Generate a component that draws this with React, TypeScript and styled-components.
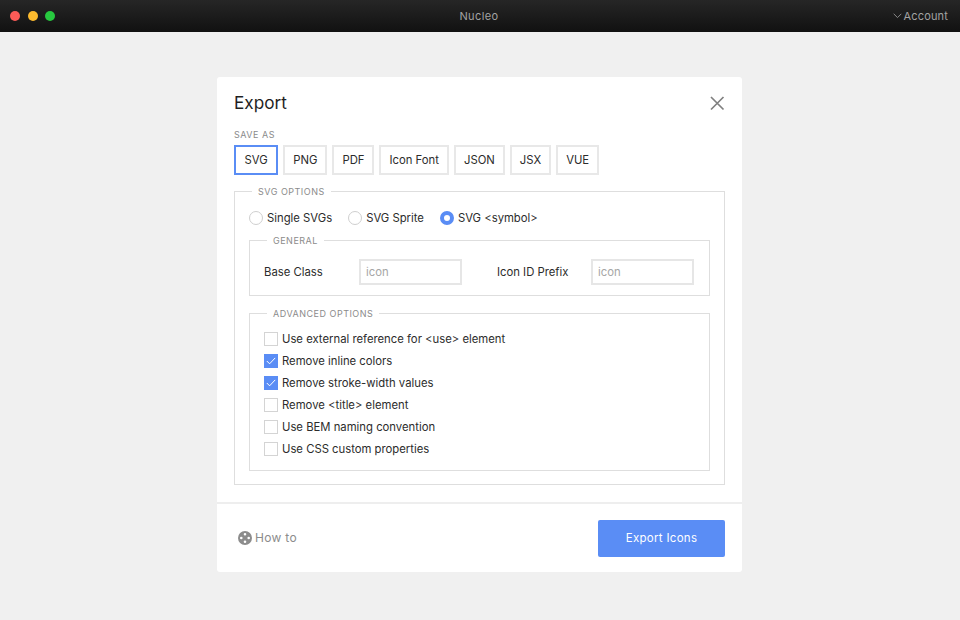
import { useState } from "react";
import styled, { createGlobalStyle } from "styled-components";

const GlobalStyle = createGlobalStyle`
	html, body {
		margin: 0;
		padding: 0;
		height: 620px;
		overflow: hidden;
		background: #f0f0f0;
		font-family: Inter, "Liberation Sans", sans-serif;
		color: #2c2c2c;
	}
`;

const Page = styled.div`
	width: 960px;
	height: 620px;
	display: flex;
	flex-direction: column;
`;

const TitleBar = styled.header`
	height: 32px;
	flex: none;
	display: grid;
	grid-template-columns: 1fr auto 1fr;
	align-items: center;
	padding: 0 12px 0 10px;
	box-sizing: border-box;
	background: linear-gradient(#262626, #111111);
`;

const Lights = styled.div`
	display: flex;
	gap: 7.5px;
`;

const Light = styled.span<{ $color: string }>`
	width: 10px;
	height: 10px;
	border-radius: 50%;
	background: ${(p) => p.$color};
`;

const AppName = styled.div`
	font-size: 11px;
	letter-spacing: 0.4px;
	color: #a3a3a3;
`;

const Account = styled.div`
	justify-self: end;
	display: flex;
	align-items: center;
	gap: 2px;
	font-size: 11px;
	letter-spacing: 0.15px;
	color: #a3a3a3;
`;

const Stage = styled.main`
	flex: 1;
	padding: 45px 0 0 217px;
`;

const Dialog = styled.section`
	width: 525px;
	height: 495px;
	box-sizing: border-box;
	display: flex;
	flex-direction: column;
	background: #fff;
	border-radius: 3px;
`;

const DialogBody = styled.div`
	padding: 0 17px;
	height: 425px;
	box-sizing: border-box;
`;

const Head = styled.div`
	height: 51px;
	padding-bottom: 1px;
	margin-bottom: 1px;
	box-sizing: border-box;
	display: flex;
	align-items: center;
	justify-content: space-between;
`;

const Title = styled.h1`
	margin: 0;
	font-size: 17.2px;
	font-weight: 400;
	color: #1f1f1f;
`;

const CloseButton = styled.button`
	width: 18px;
	height: 18px;
	padding: 0;
	margin: 2px -1px 0 0;
	border: 0;
	background: none;
	display: flex;
`;

const SmallCaps = styled.div`
	font-size: 9px;
	line-height: 12px;
	letter-spacing: 0.5px;
	color: #8b8b8b;
	text-transform: uppercase;
`;

const Formats = styled.div`
	display: flex;
	gap: 5px;
	margin-top: 4px;
`;

const FormatButton = styled.button<{ $active?: boolean }>`
	height: 30px;
	box-sizing: border-box;
	padding: 0 ${(p) => (p.$active ? "8.6px" : "8px")};
	font: 400 11.3px Inter, "Liberation Sans", sans-serif;
	color: #2c2c2c;
	background: #fff;
	border: ${(p) => (p.$active ? "2px solid #5a8df5" : "2px solid #e8e8e8")};
`;

const Group = styled.fieldset`
	margin: 0;
	padding: 0 14px;
	border: 1px solid #dedede;
	min-width: 0;
`;

const OuterGroup = styled(Group)`
	margin-top: 9px;
	height: 301px;
	box-sizing: border-box;
`;

const Legend = styled.legend`
	margin-left: 3px;
	padding: 2px 6px 0;
	font-size: 9px;
	line-height: 12px;
	letter-spacing: 0.5px;
	color: #8b8b8b;
	text-transform: uppercase;
`;

const RadioRow = styled.div`
	display: flex;
	gap: 16px;
	margin: 12px 0 0 0;
	height: 16px;
	align-items: center;
`;

const RadioLabel = styled.label`
	display: flex;
	align-items: center;
	gap: 4px;
	font-size: 11.3px;
	color: #2c2c2c;
`;

const RadioDot = styled.span<{ $on?: boolean }>`
	width: 14px;
	height: 14px;
	border-radius: 50%;
	box-sizing: border-box;
	background: #fff;
	border: ${(p) => (p.$on ? "4px solid #5a8df5" : "1px solid #cfcfcf")};
`;

const GeneralGroup = styled(Group)`
	margin-top: 7px;
	height: 63px;
	box-sizing: border-box;
`;

const FieldRow = styled.div`
	display: grid;
	grid-template-columns: 95px 103px 35px 94px 103px;
	align-items: center;
	margin-top: 12px;
`;

const FieldLabel = styled.label`
	font-size: 11.3px;
	color: #2c2c2c;
`;

const TextBox = styled.input`
	width: 103px;
	height: 26px;
	box-sizing: border-box;
	padding: 0 5px;
	border: 2px solid #e6e6e6;
	font: 400 11.3px Inter, "Liberation Sans", sans-serif;
	outline: none;
	&::placeholder {
		color: #a6a6a6;
	}
`;

const AdvancedGroup = styled(Group)`
	margin-top: 10px;
	height: 165px;
	box-sizing: border-box;
`;

const CheckList = styled.ul`
	list-style: none;
	margin: 8px 0 0;
	padding: 0;
	display: flex;
	flex-direction: column;
`;

const CheckRow = styled.li`
	height: 22px;
	display: flex;
	align-items: center;
	gap: 4px;
	font-size: 11.3px;
	color: #2c2c2c;
`;

const CheckBox = styled.span<{ $on: boolean }>`
	width: 14px;
	height: 14px;
	box-sizing: border-box;
	display: flex;
	align-items: center;
	justify-content: center;
	background: ${(p) => (p.$on ? "#5a8df5" : "#fff")};
	border: ${(p) => (p.$on ? "0" : "1px solid #d4d4d4")};
`;

const Footer = styled.footer`
	flex: 1;
	border-top: 2px solid #eeeeee;
	display: flex;
	align-items: center;
	justify-content: space-between;
	padding: 0 17px 0 21px;
`;

const HowTo = styled.a`
	display: flex;
	align-items: center;
	gap: 3px;
	font-size: 12px;
	line-height: 14px;
	letter-spacing: 0.3px;
	color: #8c8c8c;
	margin-top: -1px;
`;

const ExportButton = styled.button`
	width: 127px;
	height: 37px;
	border: 0;
	border-radius: 2px;
	background: #5a8df5;
	color: #fff;
	font: 400 11.5px Inter, "Liberation Sans", sans-serif;
	letter-spacing: 0.3px;
`;

const formats = ["SVG", "PNG", "PDF", "Icon Font", "JSON", "JSX", "VUE"];
const radios = ["Single SVGs", "SVG Sprite", "SVG <symbol>"];
const advanced = [
	{ label: "Use external reference for <use> element", on: false },
	{ label: "Remove inline colors", on: true },
	{ label: "Remove stroke-width values", on: true },
	{ label: "Remove <title> element", on: false },
	{ label: "Use BEM naming convention", on: false },
	{ label: "Use CSS custom properties", on: false },
];

export default function App() {
	const [format, setFormat] = useState("SVG");

	return (
		<Page>
			<GlobalStyle />
			<TitleBar>
				<Lights>
					<Light $color="#fc5b57" />
					<Light $color="#fdbb2e" />
					<Light $color="#27c83f" />
				</Lights>
				<AppName>Nucleo</AppName>
				<Account>
					<svg width="9" height="6" viewBox="0 0 9 6" fill="none" stroke="#8a8a8a" strokeWidth="1">
						<path d="M.7.8 4.5 4.6 8.3.8" />
					</svg>
					Account
				</Account>
			</TitleBar>
			<Stage>
				<Dialog>
					<DialogBody>
						<Head>
							<Title>Export</Title>
							<CloseButton aria-label="Close">
								<svg width="18" height="18" viewBox="0 0 18 18" fill="none" stroke="#808080" strokeWidth="1.7">
									<path d="M3 3 15.5 15.5M15.5 3 3 15.5" />
								</svg>
							</CloseButton>
						</Head>
						<SmallCaps>Save as</SmallCaps>
						<Formats>
							{formats.map((f) => (
								<FormatButton key={f} $active={f === format} onClick={() => setFormat(f)}>
									{f}
								</FormatButton>
							))}
						</Formats>
						<OuterGroup>
							<Legend>SVG options</Legend>
							<RadioRow>
								{radios.map((r, i) => (
									<RadioLabel key={r}>
										<RadioDot $on={i === 2} />
										{r}
									</RadioLabel>
								))}
							</RadioRow>
							<GeneralGroup>
								<Legend>General</Legend>
								<FieldRow>
									<FieldLabel>Base Class</FieldLabel>
									<TextBox placeholder="icon" />
									<span />
									<FieldLabel>Icon ID Prefix</FieldLabel>
									<TextBox placeholder="icon" />
								</FieldRow>
							</GeneralGroup>
							<AdvancedGroup>
								<Legend>Advanced options</Legend>
								<CheckList>
									{advanced.map((a) => (
										<CheckRow key={a.label}>
											<CheckBox $on={a.on}>
												{a.on && (
													<svg width="10" height="8" viewBox="0 0 10 8" fill="none" stroke="#fff" strokeWidth="1">
														<path d="M.8 4 3.6 6.8 9.2 .9" />
													</svg>
												)}
											</CheckBox>
											{a.label}
										</CheckRow>
									))}
								</CheckList>
							</AdvancedGroup>
						</OuterGroup>
					</DialogBody>
					<Footer>
						<HowTo>
							<svg width="14" height="14" viewBox="0 0 14 14">
								<path
									fill="#8c8c8c"
									fillRule="evenodd"
									d="M7 0a7 7 0 1 1 0 14A7 7 0 0 1 7 0ZM7 2a1.3 1.3 0 1 0 0 2.6A1.3 1.3 0 0 0 7 2ZM7 9.4A1.3 1.3 0 1 0 7 12a1.3 1.3 0 0 0 0-2.6ZM3.3 5.7a1.3 1.3 0 1 0 0 2.6 1.3 1.3 0 0 0 0-2.6ZM10.7 5.7a1.3 1.3 0 1 0 0 2.6 1.3 1.3 0 0 0 0-2.6Z"
								/>
							</svg>
							How to
						</HowTo>
						<ExportButton>Export Icons</ExportButton>
					</Footer>
				</Dialog>
			</Stage>
		</Page>
	);
}
